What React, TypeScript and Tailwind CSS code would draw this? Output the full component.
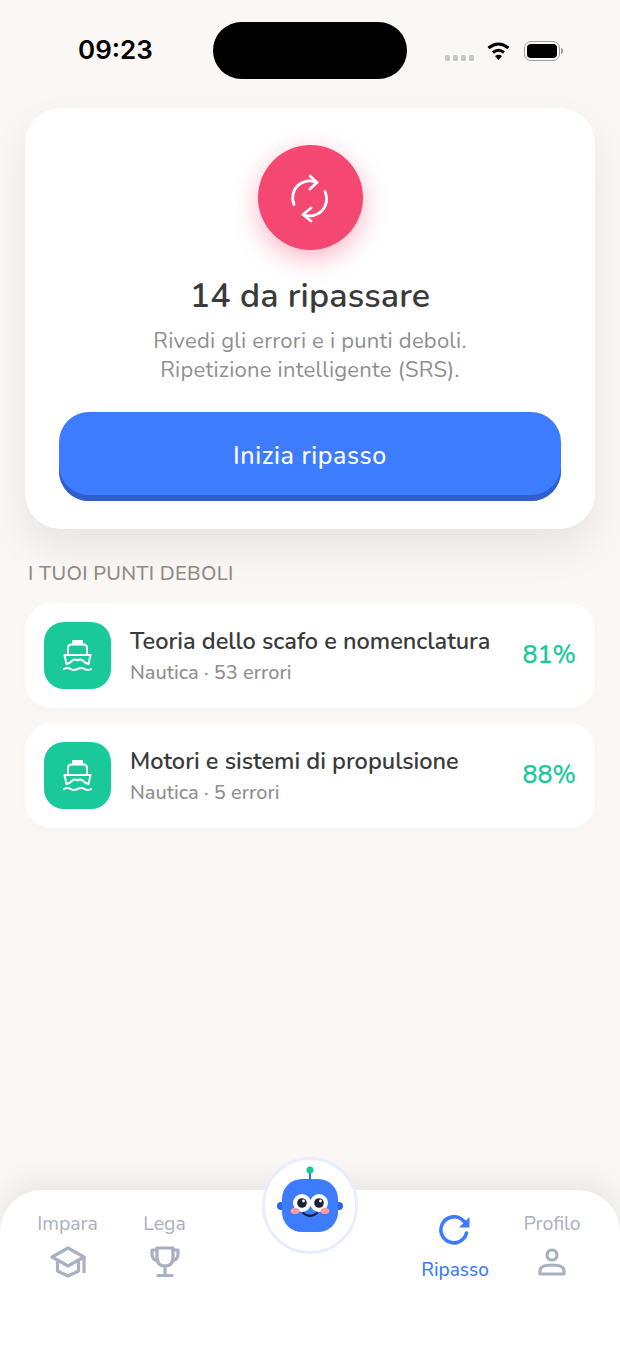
const font = { fontFamily: '"Nunito", "Noto Sans", sans-serif' };

const RepeatIcon = () => (
  <svg width="40" height="50" viewBox="0 0 40 50" fill="none" stroke="white" strokeWidth="2.8" strokeLinecap="round" strokeLinejoin="round">
    <path d="M4 31.5 A17 17 0 0 1 27 9.5" />
    <path d="M20 3 L27 9.5 L20 16" />
    <path d="M35 18.5 A17 17 0 0 1 13 41.5" />
    <path d="M21 35 L13 41.5 L21 48" />
  </svg>
);

const ShipIcon = () => (
  <svg width="29" height="31" viewBox="0 0 29 31" fill="none" stroke="white" strokeWidth="2" strokeLinecap="round" strokeLinejoin="round">
    <path d="M10 4.5 V1 H19 V4.5" fill="white" />
    <path d="M5 15 V8 Q5 4.5 8.5 4.5 H20.5 Q24 4.5 24 8 V15" />
    <path d="M1.5 15 H27.5 L25.5 24 Q22.5 23.5 19.5 20.5 Q17 18.5 14.5 20.5 Q12 18.5 9.5 20.5 Q6.5 23.5 3.5 24 Z" />
    <path d="M1 29 Q4.5 27 7.5 29 T14.5 29 T21.5 29 T28 29" />
  </svg>
);

const Mascot = () => (
  <svg width="68" height="80" viewBox="0 0 68 80">
    <line x1="34" y1="6" x2="34" y2="13" stroke="#3b6fe0" strokeWidth="2.2" />
    <circle cx="34" cy="4" r="3.6" fill="#19c99a" />
    <circle cx="5" cy="40" r="4" fill="#2f66dd" />
    <circle cx="63" cy="40" r="4" fill="#2f66dd" />
    <rect x="6" y="13" width="56" height="53" rx="20" fill="#3d7bff" />
    <circle cx="26" cy="37" r="9" fill="white" />
    <circle cx="43" cy="37" r="9" fill="white" />
    <circle cx="26" cy="37" r="4.8" fill="#1c2233" />
    <circle cx="43" cy="37" r="4.8" fill="#1c2233" />
    <circle cx="27.5" cy="35" r="1.4" fill="white" />
    <circle cx="44.5" cy="35" r="1.4" fill="white" />
    <ellipse cx="19" cy="45" rx="4.4" ry="3.1" fill="#ff9aa2" />
    <ellipse cx="49" cy="45" rx="4.4" ry="3.1" fill="#ff9aa2" />
    <path d="M27 47 Q34 53 41 47" fill="none" stroke="#1c2233" strokeWidth="2.2" strokeLinecap="round" />
  </svg>
);

const CapIcon = () => (
  <svg width="36" height="32" viewBox="0 0 36 32" fill="none" stroke="#a9b0bf" strokeWidth="3.2" strokeLinejoin="round">
    <path d="M2 11 L18 2 L34 11 L18 20 Z" />
    <path d="M7.5 15 V25 L18 30 L28.5 25 V15" />
    <path d="M34 11 V27" />
  </svg>
);

const TrophyIcon = () => (
  <svg width="30" height="32" viewBox="0 0 30 32" fill="none" stroke="#a9b0bf" strokeWidth="3.2" strokeLinejoin="round" strokeLinecap="round">
    <path d="M7 2 H23 V12 Q23 20 15 20 Q7 20 7 12 Z" />
    <path d="M7 4 H2 V8 Q2 14 8 15" />
    <path d="M23 4 H28 V8 Q28 14 22 15" />
    <path d="M15 20 V29" />
    <path d="M8 29.5 H22" />
  </svg>
);

const RefreshIcon = () => (
  <svg width="32" height="32" viewBox="0 0 32 32" fill="none">
    <path d="M27.5 19 A13 13 0 1 1 24 6.5 L27 9" stroke="#3d7bff" strokeWidth="3.6" strokeLinecap="round" />
    <path d="M30.5 3 V13.5 H20 Z" fill="#3d7bff" />
  </svg>
);

const PersonIcon = () => (
  <svg width="28" height="28" viewBox="0 0 28 28" fill="none" stroke="#a9b0bf" strokeWidth="3.2" strokeLinejoin="round">
    <circle cx="14" cy="7" r="5" />
    <path d="M2 26 V23 Q2 17 14 17 Q26 17 26 23 V26 Z" />
  </svg>
);

const weakPoints = [
  { title: "Teoria dello scafo e nomenclatura", sub: "Nautica · 53 errori", pct: "81%" },
  { title: "Motori e sistemi di propulsione", sub: "Nautica · 5 errori", pct: "88%" },
];

export default function App() {
  return (
    <div className="relative h-[1348px] w-[620px] overflow-hidden bg-[#fbf7f4] flex flex-col" style={font}>
      {/* Status bar */}
      <div className="h-[108px] shrink-0 flex items-start pl-[78px] pt-[22px]">
        <div className="w-[135px] shrink-0 pt-[13px] text-[26px] leading-[30px] font-semibold text-black" style={{ fontFamily: "Inter, sans-serif" }}>
          09:23
        </div>
        <div className="h-[57px] w-[194px] shrink-0 rounded-[29px] bg-black" />
        <div className="flex items-center ml-[38px] pt-[19px]">
          <div className="flex gap-[3px] mt-[13px] shrink-0">
            <span className="h-[6px] w-[5px] rounded-[1.5px] bg-[#c8c8c8]" />
            <span className="h-[6px] w-[5px] rounded-[1.5px] bg-[#c8c8c8]" />
            <span className="h-[6px] w-[5px] rounded-[1.5px] bg-[#c8c8c8]" />
            <span className="h-[6px] w-[5px] rounded-[1.5px] bg-[#c8c8c8]" />
          </div>
          <svg className="ml-[12px] shrink-0" width="25" height="20" viewBox="0 0 24 20" fill="none" stroke="black" strokeWidth="3">
            <path d="M2 7 Q12 -1 22 7" />
            <path d="M6.5 11.5 Q12 7 17.5 11.5" />
            <path d="M12 19 L8.5 15 Q12 12.5 15.5 15 Z" fill="black" stroke="none" />
          </svg>
          <div className="ml-[13px] h-[20px] w-[36px] shrink-0 rounded-[7px] border border-[#a0a0a0] p-[2px]">
            <div className="h-full w-full rounded-[4px] bg-black" />
          </div>
          <div className="ml-[1px] h-[6px] w-[2px] shrink-0 rounded-r bg-[#a0a0a0]" />
        </div>
      </div>

      <div className="px-[25px]">
        {/* Main card */}
        <div className="h-[421px] rounded-[36px] bg-white pt-[37px] px-[34px] flex flex-col items-center shadow-[0_20px_40px_rgba(0,0,0,0.08)]">
          <div className="h-[105px] w-[105px] rounded-full bg-[#f44771] flex items-center justify-center shadow-[0_8px_26px_rgba(244,71,113,0.4)]">
            <RepeatIcon />
          </div>
          <h1 className="mt-[24px] text-[34px] leading-[44px] font-semibold tracking-[0.15px] text-[#3a3a3a]">14 da ripassare</h1>
          <p className="mt-[9px] text-center text-[22px] leading-[29px] tracking-[0.23px] text-[#8f8f8f]">
            Rivedi gli errori e i punti deboli.
            <br />
            Ripetizione intelligente (SRS).
          </p>
          <button className="mt-[27px] h-[89px] w-full shrink-0 rounded-[30px] bg-[#3d7bff] text-[25px] font-medium tracking-[0.6px] text-white shadow-[inset_0_-6px_0_#2f5fc9]">
            Inizia ripasso
          </button>
        </div>

        <div className="mt-[32px] pl-[3px] text-[20px] leading-[26px] font-medium tracking-[0.3px] text-[#8e8a85]">I TUOI PUNTI DEBOLI</div>

        <div className="mt-[16px] flex flex-col gap-[15px]">
          {weakPoints.map((w) => (
            <div key={w.title} className="h-[105px] rounded-[26px] bg-white px-[19px] flex items-center shadow-[0_2px_8px_rgba(0,0,0,0.02)]">
              <div className="h-[67px] w-[67px] rounded-[20px] bg-[#19c99a] flex items-center justify-center">
                <ShipIcon />
              </div>
              <div className="ml-[19px] flex-1">
                <div className="text-[23.5px] leading-[32px] font-semibold text-[#3a3a3a]">{w.title}</div>
                <div className="text-[20px] leading-[28px] mt-[2px] font-medium text-[#8f8f8f]">{w.sub}</div>
              </div>
              <div className="text-[25px] font-semibold text-[#19c99a]">{w.pct}</div>
            </div>
          ))}
        </div>
      </div>

      {/* Tab bar */}
      <div className="mt-auto relative h-[158px] rounded-t-[42px] bg-white shadow-[0_-8px_30px_rgba(0,0,0,0.08)] flex items-start">
        <div className="absolute left-[262px] top-[-33px] h-[97px] w-[96px] rounded-full border-[3px] border-[#e6eeff] bg-white flex items-center justify-center">
          <Mascot />
        </div>
        <div className="w-[135px] pt-[21px] flex flex-col items-center text-[19.5px] leading-[26px] text-[#a9b0bf]">
          Impara
          <div className="mt-[9px]"><CapIcon /></div>
        </div>
        <div className="w-[59px] pt-[21px] flex flex-col items-center text-[19.5px] leading-[26px] text-[#a9b0bf]">
          Lega
          <div className="mt-[9px]"><TrophyIcon /></div>
        </div>
        <div className="ml-[221px] w-[80px] pt-[24px] flex flex-col items-center text-[19px] leading-[26px] font-medium text-[#3d7bff]">
          <RefreshIcon />
          <div className="mt-[11px]">Ripasso</div>
        </div>
        <div className="ml-[27px] w-[60px] pt-[21px] flex flex-col items-center text-[19.5px] leading-[26px] text-[#a9b0bf]">
          Profilo
          <div className="mt-[11px]"><PersonIcon /></div>
        </div>
      </div>
    </div>
  );
}
